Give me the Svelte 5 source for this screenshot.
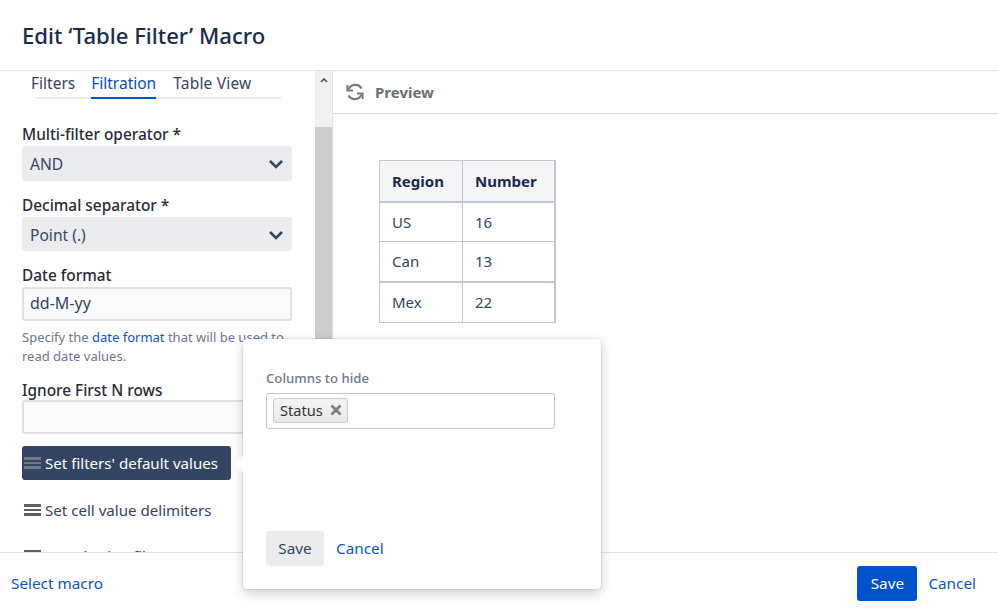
<script>
  const rows = [["US", 16], ["Can", 13], ["Mex", 22]];
</script>

<div class="dialog">
  <header class="head"><h1>Edit ‘Table Filter’ Macro</h1></header>
  <div class="body">
    <aside class="side">
      <div class="side-in">
        <nav class="tabs">
          <span class="tab">Filters</span>
          <span class="tab active">Filtration</span>
          <span class="tab last">Table View</span>
        </nav>
        <label class="lab first">Multi-filter operator *</label>
        <div class="select">AND
          <svg width="16" height="10" viewBox="0 0 16 10"><path d="M2 2l6 6 6-6" fill="none" stroke="#344563" stroke-width="2.6"/></svg>
        </div>
        <label class="lab">Decimal separator *</label>
        <div class="select short">Point (.)
          <svg width="16" height="10" viewBox="0 0 16 10"><path d="M2 2l6 6 6-6" fill="none" stroke="#344563" stroke-width="2.6"/></svg>
        </div>
        <label class="lab">Date format</label>
        <div class="input date">dd-M-yy</div>
        <p class="help">Specify the <a href="#a">date format</a> that will be used to read date values.</p>
        <label class="lab ign">Ignore First N rows</label>
        <div class="input n"></div>
        <div class="btn dark"><span class="bars light"><i></i><i></i><i></i></span>Set filters' default values</div>
        <div class="btn"><span class="bars"><i></i><i></i><i></i></span>Set cell value delimiters</div>
        <div class="btn third"><span class="bars"><i></i><i></i><i></i></span>Saved value filters</div>
      </div>
      <div class="scroll">
        <div class="track">
          <svg width="10" height="6" viewBox="0 0 10 6"><path d="M2 5l3-3 3 3" fill="none" stroke="#555" stroke-width="1.6"/></svg>
        </div>
        <div class="thumb"></div>
      </div>
    </aside>
    <main class="preview">
      <div class="pv-head">
        <svg width="20" height="20" viewBox="0 0 20 20" fill="none" stroke="#77797c" stroke-width="2.2">
          <path d="M16.5 6.5A7.2 7.2 0 0 0 3.6 7.4"/>
          <path d="M2.4 3v5.6H8" stroke-width="2"/>
          <path d="M3.5 13.5a7.2 7.2 0 0 0 12.9-.9"/>
          <path d="M17.6 17v-5.6H12" stroke-width="2"/>
        </svg>
        <span>Preview</span>
      </div>
      <div class="pv-body">
        <table>
          <thead><tr><th>Region</th><th>Number</th></tr></thead>
          <tbody>
            {#each rows as r}
              <tr><td>{r[0]}</td><td>{r[1]}</td></tr>
            {/each}
          </tbody>
        </table>
      </div>
    </main>
  </div>
  <footer class="foot">
    <a href="#s">Select macro</a>
    <div class="foot-r">
      <button class="primary">Save</button>
      <a href="#c">Cancel</a>
    </div>
  </footer>

  <div class="popup">
    <span class="arrow"></span>
    <div class="pop-lab">Columns to hide</div>
    <div class="multi">
      <span class="chip">Status
        <svg width="12" height="12" viewBox="0 0 12 12"><path d="M1.5 1.5l9 9M10.5 1.5l-9 9" stroke="#7d7d7d" stroke-width="2.8"/></svg>
      </span>
    </div>
    <div class="pop-act">
      <button class="grey">Save</button>
      <a href="#c2">Cancel</a>
    </div>
  </div>
</div>

<style>
  :global(body) { margin: 0; background: #fff; }
  .dialog {
    position: relative;
    width: 998px;
    height: 611px;
    display: flex;
    flex-direction: column;
    overflow: hidden;
    font-family: "Noto Sans", "Open Sans", sans-serif;
    font-size: 15px;
    color: #344563;
  }
  a { color: #0b55c9; text-decoration: none; }
  .head { height: 71px; flex: none; box-sizing: border-box; border-bottom: 1px solid #e2e4e9; display: flex; align-items: center; padding: 0 0 0 22px; }
  h1 { margin: 0; font-size: 22.1px; font-weight: 500; color: #172b4d; }
  .body { flex: 1; display: flex; min-height: 0; }
  .side { width: 333px; flex: none; display: flex; overflow: hidden; border-right: 1px solid #dfe1e6; box-sizing: border-box; }
  .side-in { width: 315px; flex: none; box-sizing: border-box; padding: 0 23px 0 22px; }
  .tabs { display: flex; height: 28px; margin-left: 12px; box-sizing: border-box; border-bottom: 2px solid #ebecf0; width: 247px; font-size: 15.5px; }
  .tab { height: 28px; margin-left: -3px; margin-right: 19px; line-height: 25px; white-space: nowrap; box-sizing: border-box; }
  .tab.last { letter-spacing: .2px; margin-left: -2px; }
  .tab.active { color: #0b4fbd; border-bottom: 2px solid #0052cc; }
  .lab { display: block; font-weight: 500; color: #262c38; line-height: 20px; font-size: 15.4px; margin-top: 15px; }
  .lab.first { margin-top: 26px; }
  .select { margin-top: 1px; height: 35px; box-sizing: border-box; background: #ebecf0; border-radius: 3px; display: flex; align-items: center; justify-content: space-between; padding: 1px 8px 0 8px; font-size: 15.6px; }
  .select.short { height: 34px; }
  .input { height: 34px; box-sizing: border-box; background: #fafbfc; border: 2px solid #dfe1e6; border-radius: 3px; padding: 0 6px; line-height: 29px; font-size: 16px; }
  .input.date { margin-top: 1px; }
  .input.n { margin-top: -1px; }
  .help { margin: 7px 0 0; font-size: 13px; line-height: 19px; color: #6b778c; width: 275px; }
  .lab.ign { margin-top: 15px; }
  .btn { margin-top: 13px; height: 34px; width: 209px; box-sizing: border-box; display: flex; align-items: center; border-radius: 3px; padding-left: 2px; font-size: 15.1px; white-space: nowrap; }
  .btn.dark { background: #344563; color: #fff; margin-top: 12px; }
  .btn.third { margin-top: 12px; }
  .bars { display: flex; flex-direction: column; gap: 2px; width: 17px; margin-right: 4px; }
  .bars i { display: block; height: 2.5px; background: #5c5f66; }
  .bars.light i { background: #75797f; }
  .scroll { width: 17px; flex: none; background: #f1f1f1; display: flex; flex-direction: column; }
  .track { height: 56px; flex: none; display: flex; justify-content: center; padding-top: 6px; box-sizing: border-box; }
  .thumb { flex: 1; background: #cdcdcd; }
  .preview { flex: 1; min-width: 0; }
  .pv-head { height: 43px; box-sizing: border-box; border-bottom: 1px solid #d4d7dd; display: flex; align-items: center; padding: 0 0 0 12px; gap: 10px; font-weight: 700; color: #6b6e73; font-size: 15px; }
  .pv-body { padding: 46px 0 0 46px; }
  table { border-collapse: collapse; color: #344563; font-size: 15px; border-right: 2px solid #c1c7d0; }
  th, td { border: 1px solid #c1c7d0; text-align: left; padding: 0 12px; height: 40px; box-sizing: border-box; font-weight: 400; }
  th { background: #f4f5f7; color: #172b4d; font-weight: 700; border-bottom-width: 2px; height: 41px; }
  tbody tr:last-child td { border-top-width: 2px; height: 41px; }
  th:first-child, td:first-child { width: 83px; }
  th:last-child, td:last-child { width: 92px; }
  .foot { flex: none; height: 59px; box-sizing: border-box; border-top: 1px solid #dfe1e6; background: #fff; display: flex; align-items: center; justify-content: space-between; padding: 2px 22px 0 11px; position: relative; font-size: 15.3px; }
  .foot-r { display: flex; align-items: center; gap: 11px; }
  button { font: inherit; border: 0; border-radius: 3px; cursor: pointer; }
  .primary { background: #0052cc; color: #fff; width: 60px; height: 35px; padding: 0; }
  .popup {
    position: absolute;
    left: 243px;
    top: 339px;
    width: 358px;
    height: 250px;
    box-sizing: border-box;
    background: #fff;
    border-radius: 4px;
    box-shadow: 0 4px 12px rgba(9, 30, 66, .22), 0 0 2px rgba(9, 30, 66, .2);
    padding: 30px 46px 0 23px;
    display: flex;
    flex-direction: column;
  }
  .arrow { position: absolute; left: -8px; top: 117px; width: 16px; height: 16px; background: #fff; transform: rotate(45deg) scale(.75); }
  .pop-lab { font-size: 13.2px; line-height: 18px; color: #6b778c; font-weight: 500; }
  .multi { margin-top: 6px; height: 36px; box-sizing: border-box; border: 1px solid #c1c7d0; border-radius: 3px; padding: 4px 6px; display: flex; align-items: flex-start; }
  .chip { display: flex; align-items: center; gap: 7px; height: 25px; box-sizing: border-box; background: linear-gradient(#f4f4f4, #e8e8e8); border: 1px solid #c9ccd2; border-radius: 3px; padding: 0 5px 2px 6px; color: #333; font-size: 14.6px; }
  .chip svg { margin-top: 1px; }
  .pop-act { margin-top: auto; margin-bottom: 23px; display: flex; align-items: center; gap: 12px; font-size: 15.3px; }
  .pop-act a { padding-bottom: 2px; }
  .grey { background: #ebecf0; color: #344563; width: 58px; height: 35px; padding: 0 0 2px; }
</style>
